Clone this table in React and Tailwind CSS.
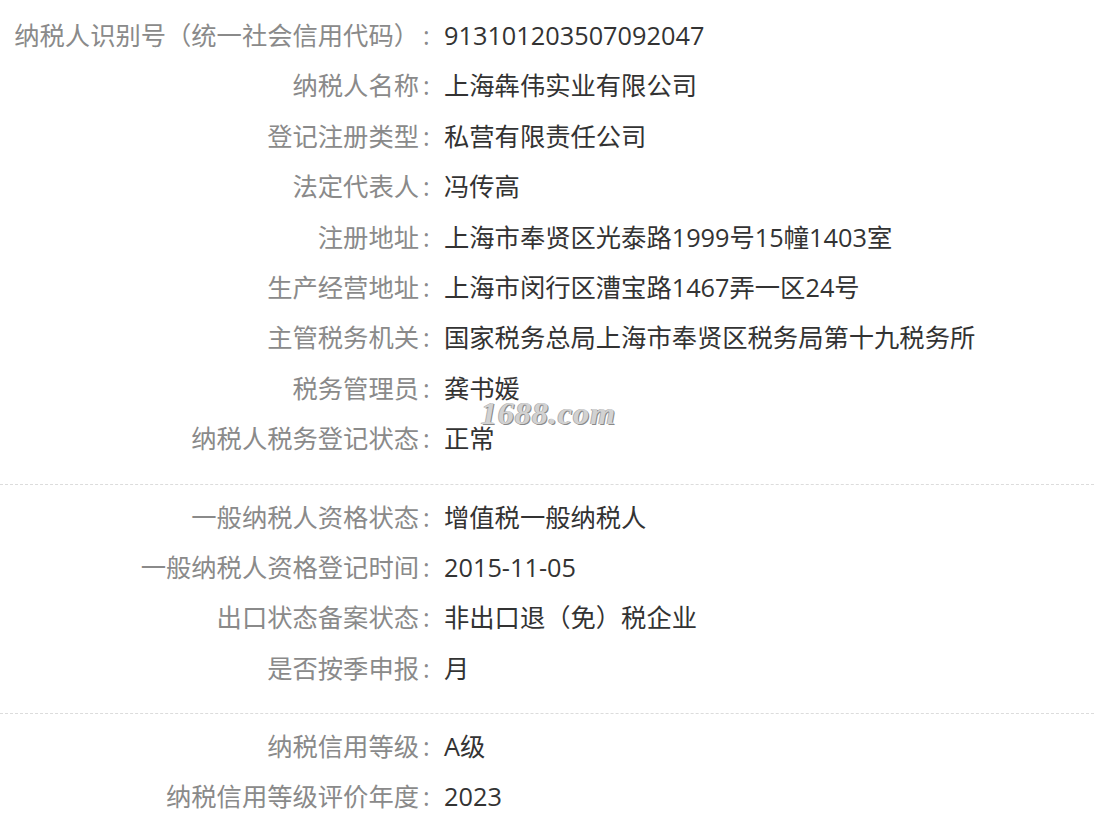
const sections = [
  [
    ["纳税人识别号（统一社会信用代码）", "913101203507092047"],
    ["纳税人名称", "上海犇伟实业有限公司"],
    ["登记注册类型", "私营有限责任公司"],
    ["法定代表人", "冯传高"],
    ["注册地址", "上海市奉贤区光泰路1999号15幢1403室"],
    ["生产经营地址", "上海市闵行区漕宝路1467弄一区24号"],
    ["主管税务机关", "国家税务总局上海市奉贤区税务局第十九税务所"],
    ["税务管理员", "龚书媛"],
    ["纳税人税务登记状态", "正常"],
  ],
  [
    ["一般纳税人资格状态", "增值税一般纳税人"],
    ["一般纳税人资格登记时间", "2015-11-05"],
    ["出口状态备案状态", "非出口退（免）税企业"],
    ["是否按季申报", "月"],
  ],
  [
    ["纳税信用等级", "A级"],
    ["纳税信用等级评价年度", "2023"],
  ],
];

const Row = ({ label, value }) => (
  <div className="flex h-[50.4px] leading-[50.4px] whitespace-nowrap">
    <div className="w-[444px] shrink-0 flex justify-end text-[#8a8a8a]">
      <span>{label}</span>
      <span className="w-[25px] pl-[4px] text-left">:</span>
    </div>
    <div className="text-[#333]">{value}</div>
  </div>
);

export default function App() {
  return (
    <div className="relative w-[1094px] h-[826px] bg-white overflow-hidden pt-[10px] text-[25.3px] font-['Open_Sans','Noto_Sans_CJK_SC',sans-serif]">
      {sections.map((rows, i) => (
        <div
          key={i}
          className={
            i < sections.length - 1
              ? "pb-[20px] mb-[7px] border-b border-dashed border-[#dcdcdc]"
              : ""
          }
        >
          {rows.map(([label, value]) => (
            <Row key={label} label={label} value={value} />
          ))}
        </div>
      ))}

      {/* watermark */}
      <div className="absolute left-[481px] top-[397px] text-[32px] leading-none italic font-bold tracking-[1px] text-[#d2d2d2] font-['Liberation_Serif',serif] [text-shadow:1px_1px_0_#8a8a8a,-1px_0_0_#b0b0b0] pointer-events-none">
        1688.com
      </div>
    </div>
  );
}
